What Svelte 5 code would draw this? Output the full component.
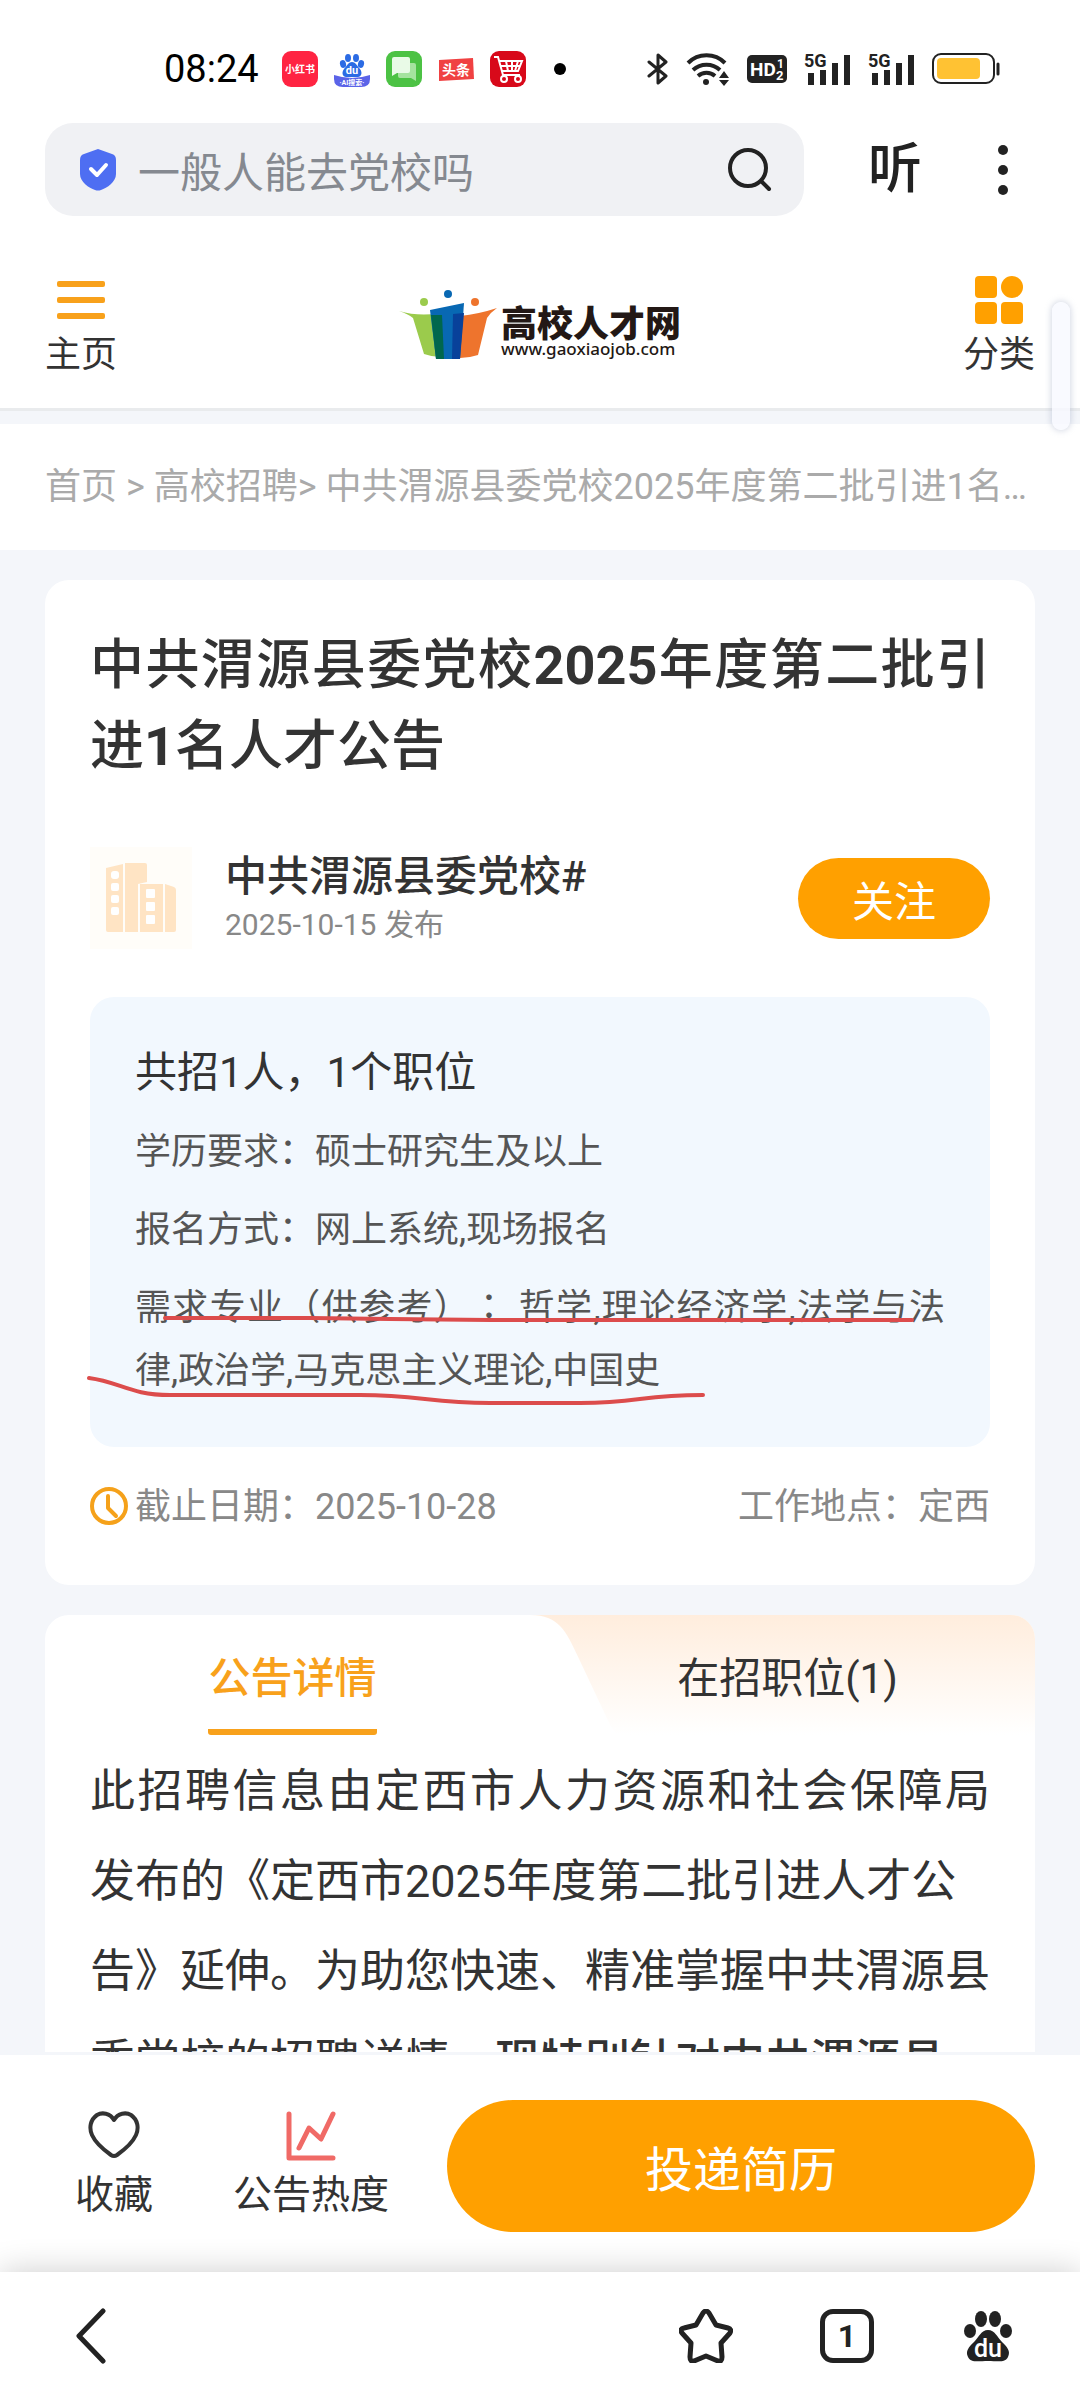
<script>
  const facts = [
    { label: "学历要求：", value: "硕士研究生及以上" },
    { label: "报名方式：", value: "网上系统,现场报名" }
  ];

  let query = "一般人能去党校吗";
  let activeTab = "detail";
</script>

<div class="screen">
  <div class="status">
    <span class="time">08:24</span>
    <div class="apps">
      <svg width="36" height="36" viewBox="0 0 36 36" aria-hidden="true">
        <rect width="36" height="36" rx="9" fill="#ff2442" />
        <text x="18" y="22" text-anchor="middle" font-size="10" font-weight="700" fill="#fff">小红书</text>
      </svg>
      <svg width="36" height="36" viewBox="0 0 36 36" aria-hidden="true">
        <g fill="#2b6be4">
          <ellipse cx="14" cy="7" rx="3" ry="4" />
          <ellipse cx="22" cy="7" rx="3" ry="4" />
          <ellipse cx="9" cy="13" rx="3" ry="4" transform="rotate(-15 9 13)" />
          <ellipse cx="27" cy="13" rx="3" ry="4" transform="rotate(15 27 13)" />
          <path d="M18 11c4 0 5 4 8 7 3 4 1 8-2 8H12c-3 0-5-4-2-8 3-3 4-7 8-7z" />
        </g>
        <text x="18" y="23" text-anchor="middle" font-size="11" font-weight="700" fill="#fff">du</text>
        <path d="M0 24q18 6 36 0v4q0 8-9 8H9q-9 0-9-8z" fill="#5b63e8" />
        <text x="18" y="34" text-anchor="middle" font-size="7" font-weight="700" fill="#fff">·AI搜索·</text>
      </svg>
      <svg width="36" height="36" viewBox="0 0 36 36" aria-hidden="true">
        <rect width="36" height="36" rx="9" fill="#4cc244" />
        <path d="M14 12h14q2 0 2 2v16l-5-3H14q-2 0-2-2V14q0-2 2-2z" fill="#a5e39f" />
        <path d="M8 6h14q2 0 2 2v12q0 2-2 2H11l-5 3V8q0-2 2-2z" fill="#e9fae7" />
      </svg>
      <svg width="36" height="36" viewBox="0 0 36 36" aria-hidden="true">
        <path d="M1 9l34-2 1 21-35 2z" fill="#f04142" />
        <text x="18" y="24" text-anchor="middle" font-size="14" font-weight="700" fill="#fff">头条</text>
      </svg>
      <svg width="36" height="36" viewBox="0 0 36 36" aria-hidden="true">
        <rect width="36" height="36" rx="9" fill="#d8091a" />
        <path d="M4 6h4l5 18h17M9 10h23l-4 10H12M10 15h20M16 10l2 10M22 10v10M28 10l-3 10" fill="none" stroke="#fff" stroke-width="2" />
        <circle cx="14" cy="28" r="3" fill="none" stroke="#fff" stroke-width="2" />
        <circle cx="28" cy="28" r="3" fill="none" stroke="#fff" stroke-width="2" />
      </svg>
    </div>
    <i class="more-dot"></i>
    <div class="signals">
      <svg width="22" height="34" viewBox="0 0 22 34" aria-hidden="true">
        <path d="M2 10l17 14-8 7V3l8 7L2 24" fill="none" stroke="#222" stroke-width="3" stroke-linejoin="round" stroke-linecap="round" />
      </svg>
      <svg width="44" height="34" viewBox="0 0 44 34" aria-hidden="true">
        <g fill="none" stroke="#222" stroke-width="4">
          <path d="M2 11a26 26 0 0 1 37 0" />
          <path d="M7 18a20 20 0 0 1 27 0" />
          <path d="M12 24a13 13 0 0 1 17 0" />
        </g>
        <circle cx="20" cy="30" r="3" fill="#222" />
        <path d="M38 19l5 7H33zM38 34l5-6H33z" fill="#222" />
      </svg>
      <svg width="40" height="28" viewBox="0 0 40 28" aria-hidden="true">
        <rect width="40" height="28" rx="5" fill="#222" />
        <text x="3" y="21" font-size="19" font-weight="700" fill="#fff">HD</text>
        <text x="30" y="13" font-size="12" font-weight="700" fill="#fff">1</text>
        <text x="29" y="25" font-size="13" font-weight="700" fill="#fff">2</text>
      </svg>
      {#each [1, 2] as sim (sim)}
        <svg width="47" height="34" viewBox="0 0 47 34" aria-hidden="true">
          <text x="0" y="15" font-size="18" font-weight="700" fill="#222">5G</text>
          <path d="M4 21h6v12H4zM16 18h6v15h-6zM28 11h6v22h-6zM40 3h6v30h-6z" fill="#222" />
        </svg>
      {/each}
      <svg width="68" height="32" viewBox="0 0 68 32" aria-hidden="true">
        <rect x="1" y="1" width="61" height="29" rx="8" fill="none" stroke="#222" stroke-width="2" />
        <rect x="5" y="5" width="43" height="21" rx="4" fill="#ffc233" />
        <path d="M66 11v10" stroke="#222" stroke-width="3" stroke-linecap="round" />
      </svg>
    </div>
  </div>

  <form class="browser" on:submit|preventDefault>
    <div class="search">
      <svg width="36" height="42" viewBox="0 0 36 42" aria-hidden="true">
        <path d="M18 0l14 5q4 1 4 6v14c0 8-9 14-15 16q-3 1-6 0C9 39 0 33 0 25V11q0-5 4-6z" fill="#4e6ef2" />
        <path d="M11 20l6 6 9-10" fill="none" stroke="#fff" stroke-width="4" stroke-linecap="round" stroke-linejoin="round" />
      </svg>
      <input type="text" aria-label="搜索" bind:value={query} />
      <button class="plain" type="submit" aria-label="搜索">
        <svg width="44" height="44" viewBox="0 0 44 44">
          <circle cx="20" cy="20" r="18" fill="none" stroke="#222" stroke-width="4" />
          <path d="M34 34l7 7" stroke="#222" stroke-width="4" stroke-linecap="round" />
        </svg>
      </button>
    </div>
    <button class="plain listen" type="button">听</button>
    <button class="plain" type="button" aria-label="更多">
      <svg width="10" height="50" viewBox="0 0 10 50" fill="#222">
        <circle cx="5" cy="5" r="5" />
        <circle cx="5" cy="25" r="5" />
        <circle cx="5" cy="45" r="5" />
      </svg>
    </button>
  </form>

  <header>
    <a class="nav-link" href="#home">
      <svg width="48" height="48" viewBox="0 0 48 48" fill="#f8a11b" aria-hidden="true">
        <rect y="5" width="48" height="6" rx="2" />
        <rect y="21" width="48" height="6" rx="2" />
        <rect y="37" width="48" height="6" rx="2" />
      </svg>
      主页
    </a>
    <a class="logo" href="#gaoxiaojob">
      <svg width="98" height="70" viewBox="0 0 98 70" aria-hidden="true">
        <path d="M0 21q20 6 42 2v44q-9 0-17-3L14 28q-5-4-14-7z" fill="#9bcb4c" />
        <path d="M98 18q-18 6-37 8v42q9 0 18-3l9-37q4-6 10-10z" fill="#ee742d" />
        <path d="M31 20l34-7-4 56H37z" fill="#0868b3" />
        <path d="M32 25h11l2 44h-8z" fill="#00674d" />
        <path d="M54 24l11-1-4 46h-8z" fill="#08419a" />
        <circle cx="25" cy="12" r="4" fill="#9bcb4c" />
        <circle cx="49" cy="4" r="4" fill="#0868b3" />
        <circle cx="76" cy="12" r="4" fill="#ee742d" />
      </svg>
      <span class="logo-text">
        <b>高校人才网</b>
        <small>www.gaoxiaojob.com</small>
      </span>
    </a>
    <a class="nav-link" href="#category">
      <svg width="48" height="48" viewBox="0 0 48 48" fill="#ffa000" aria-hidden="true">
        <rect width="22" height="22" rx="4" />
        <circle cx="37" cy="11" r="11" />
        <rect y="26" width="22" height="22" rx="4" />
        <rect x="26" y="26" width="22" height="22" rx="4" />
      </svg>
      分类
    </a>
  </header>
  <div class="scroll-handle"></div>

  <main>
    <nav class="crumbs">
      <a href="#home">首页</a> &gt; <a href="#jobs">高校招聘</a>&gt; 中共渭源县委党校2025年度第二批引进1名人才公告
    </nav>

    <article class="card summary">
      <h1>中共渭源县委党校<b>2025</b>年度第二批引进<b>1</b>名人才公告</h1>

      <div class="org">
        <div class="org-logo">
          <svg width="70" height="70" viewBox="0 0 70 70" aria-hidden="true">
            <path d="M0 5l17-4v68H2q-2 0-2-2zM19 0h20q2 0 2 2v17l-9 2v48H19zM34 21h23v48H34zM59 21l9 3q2 1 2 3v40q0 2-2 2h-9z" fill="#ffe4c4" />
            <g fill="#fff">
              <rect x="5" y="8" width="8" height="8" rx="3" />
              <rect x="5" y="20" width="8" height="8" rx="2" />
              <rect x="5" y="32" width="8" height="8" rx="2" />
              <rect x="5" y="44" width="8" height="8" rx="2" />
              <rect x="40" y="26" width="9" height="9" rx="1" />
              <rect x="40" y="39" width="9" height="9" rx="1" />
              <rect x="40" y="52" width="9" height="9" rx="1" />
            </g>
          </svg>
        </div>
        <div class="org-info">
          <h2>中共渭源县委党校#</h2>
          <time datetime="2025-10-15">2025-10-15 发布</time>
        </div>
        <button class="follow" type="button">关注</button>
      </div>

      <section class="facts">
        <h3>共招1人，1个职位</h3>
        {#each facts as fact}
          <p>{fact.label}{fact.value}</p>
        {/each}
        <p>
          需求专业（供参考）<span class="colon">：</span> 哲学,理论经济学,法学与法律,政治学,马克思主义理论,中国史
        </p>
        <!-- hand-drawn underlines over the majors -->
        <svg class="marks" viewBox="0 0 900 450" aria-hidden="true">
          <path d="M75 321H220L300 322 400 323H822" />
          <path d="M-1 381C30 385 40 398 80 398H270C330 398 340 406 400 406H490C550 406 550 398 613 398" />
        </svg>
      </section>

      <div class="meta">
        <svg width="40" height="40" viewBox="0 0 40 40" fill="none" stroke="#f5a11a" stroke-width="4" aria-hidden="true">
          <circle cx="19" cy="19" r="17" />
          <path d="M18 9v12l8 8" stroke-linecap="round" stroke-linejoin="round" />
        </svg>
        <span>截止日期：2025-10-28</span>
        <span class="place">工作地点：定西</span>
      </div>
    </article>

    <article class="card detail">
      <div class="tabs" role="tablist">
        <svg class="tab-shape" viewBox="0 0 550 120" preserveAspectRatio="none" aria-hidden="true">
          <defs>
            <linearGradient id="tabFill" x1="0" y1="0" x2="0" y2="1">
              <stop offset="0" stop-color="#ffeddd" />
              <stop offset="1" stop-color="#fff" />
            </linearGradient>
          </defs>
          <path d="M40 0C68 0 76 16 88 42L118 105Q124 120 134 120H550V0z" fill="url(#tabFill)" />
        </svg>
        <button class="tab" role="tab" type="button" class:active={activeTab === "detail"} aria-selected={activeTab === "detail"} on:click={() => (activeTab = "detail")}>
          <span>公告详情</span>
        </button>
        <button class="tab" role="tab" type="button" class:active={activeTab === "jobs"} aria-selected={activeTab === "jobs"} on:click={() => (activeTab = "jobs")}>
          <span>在招职位(1)</span>
        </button>
      </div>
      <p class="body">
        <span class="spread">此招聘信息由定西市人力资源和社会保障局</span>发布的《定西市2025年度第二批引进人才公告》延伸。为助您快速、精准掌握中共渭源县委党校的招聘详情，<b>现特别针对中共渭源县</b>
      </p>
    </article>
  </main>

  <div class="actions">
    <button class="plain action" type="button">
      <svg width="52" height="52" viewBox="0 0 52 52" aria-hidden="true">
        <path d="M26 10C22 3 14 2 9 5 2 10 1 18 4 25c4 9 12 15 19 20q3 2 6 0c7-5 15-11 19-20 3-7 2-15-5-20C38 2 30 3 26 10z" fill="none" stroke="#333" stroke-width="4" stroke-linejoin="round" />
      </svg>
      收藏
    </button>
    <button class="plain action" type="button">
      <svg width="52" height="52" viewBox="0 0 52 52" fill="none" stroke="#f06a66" stroke-width="5" stroke-linecap="round" stroke-linejoin="round" aria-hidden="true">
        <path d="M4 4v44h44" />
        <path d="M14 38l10-20 12 11L48 4" />
      </svg>
      公告热度
    </button>
    <button class="apply" type="button">投递简历</button>
  </div>

  <nav class="toolbar">
    <button class="plain back" type="button" aria-label="返回">
      <svg width="32" height="56" viewBox="0 0 32 56">
        <path d="M28 3L4 28l24 25" fill="none" stroke="#222" stroke-width="5" stroke-linecap="round" stroke-linejoin="round" />
      </svg>
    </button>
    <button class="plain" type="button" aria-label="收藏">
      <svg width="54" height="54" viewBox="0 0 54 54">
        <path d="M24 4q3-4 6 0l7 12 12 3q4 1 2 5l-9 10 1 14q0 5-4 4l-12-5-12 5q-4 1-4-4l1-14-9-10q-3-4 2-5l12-3z" fill="none" stroke="#222" stroke-width="5" stroke-linejoin="round" />
      </svg>
    </button>
    <button class="plain windows" type="button">1</button>
    <button class="plain" type="button" aria-label="百度首页">
      <svg width="54" height="54" viewBox="0 0 54 54">
        <g fill="#222">
          <ellipse cx="20" cy="10" rx="6" ry="8" />
          <ellipse cx="34" cy="10" rx="6" ry="8" />
          <ellipse cx="9" cy="22" rx="6" ry="7" />
          <ellipse cx="45" cy="22" rx="6" ry="7" />
          <path d="M27 21c7 0 9 7 14 12s9 9 6 15-10 4-20 4-17 2-20-4 1-10 6-15 7-12 14-12z" />
        </g>
        <text x="27" y="48" text-anchor="middle" font-size="25" font-weight="500" fill="#fff">du</text>
      </svg>
    </button>
  </nav>
</div>

<style>
  :global(body) {
    margin: 0;
  }

  .screen {
    position: relative;
    display: flex;
    flex-direction: column;
    height: 100vh;
    overflow: hidden;
    background: #fff;
    color: #333;
    font-family: Roboto, "Noto Sans CJK SC", sans-serif;
    font-size: 36px;
  }

  svg {
    display: block;
    flex: none;
  }

  a {
    color: inherit;
    text-decoration: none;
  }

  h1,
  h2,
  h3,
  p {
    margin: 0;
    font-weight: 400;
  }

  button {
    padding: 0;
    border: none;
    font-family: inherit;
    cursor: pointer;
  }

  .plain {
    background: none;
    color: #333;
  }

  /* system bar */
  .status {
    display: flex;
    align-items: center;
    height: 36px;
    padding: 51px 80px 36px 164px;
  }

  .time {
    font-size: 38px;
    color: #000;
  }

  .apps {
    display: flex;
    gap: 16px;
    margin-left: 23px;
  }

  .more-dot {
    width: 12px;
    height: 12px;
    margin-left: 28px;
    border-radius: 50%;
    background: #000;
  }

  .signals {
    display: flex;
    align-items: center;
    gap: 17px;
    margin-left: auto;
  }

  /* browser address row */
  .browser {
    display: flex;
    align-items: center;
    padding: 0 72px 0 45px;
  }

  .search {
    display: flex;
    flex: 1;
    align-items: center;
    height: 93px;
    padding: 0 32px 0 35px;
    border-radius: 28px;
    background: #f0f1f4;
  }

  .search input {
    flex: 1;
    min-width: 0;
    padding: 0 0 0 22px;
    border: none;
    outline: none;
    background: none;
    color: #858990;
    font-family: inherit;
    font-size: 42px;
  }

  .listen {
    margin: 0 76px 0 64px;
    font-size: 54px;
    font-weight: 500;
    line-height: 60px;
    color: #222;
  }

  header {
    display: flex;
    align-items: center;
    justify-content: space-between;
    padding: 60px 45px 26px;
    border-bottom: 3px solid #e9ebed;
  }

  .nav-link {
    display: flex;
    flex-direction: column;
    align-items: center;
    gap: 4px;
    line-height: 54px;
  }

  .logo {
    display: flex;
    align-items: center;
    gap: 4px;
    color: #231815;
  }

  .logo svg {
    margin-bottom: 8px;
  }

  .logo-text {
    display: flex;
    flex-direction: column;
    padding-top: 8px;
  }

  .logo-text b {
    font-size: 36px;
    font-weight: 900;
    line-height: 32px;
  }

  .logo-text small {
    font-family: "Noto Sans", sans-serif;
    font-size: 17px;
    font-weight: 500;
    line-height: 16px;
  }

  .scroll-handle {
    position: absolute;
    top: 302px;
    right: 10px;
    z-index: 2;
    width: 18px;
    height: 128px;
    border-radius: 9px;
    background: rgba(248, 249, 255, 0.8);
    box-shadow: 0 0 6px 1px rgba(150, 160, 190, 0.4);
  }

  main {
    flex: 1;
    min-height: 0;
    overflow: hidden;
    padding-top: 13px;
    background: #f4f6fa;
  }

  .crumbs {
    margin-bottom: 30px;
    padding: 0 45px;
    overflow: hidden;
    background: #fff;
    color: #aaa;
    line-height: 126px;
    text-overflow: ellipsis;
    white-space: nowrap;
  }

  .card {
    margin: 0 45px 30px;
    border-radius: 24px;
    background: #fff;
  }

  .summary {
    padding: 45px 45px 54px;
  }

  h1 {
    font-size: 54px;
    font-weight: 500;
    line-height: 81px;
    text-align: justify;
  }

  .org {
    display: flex;
    align-items: center;
    margin: 60px 0 48px;
  }

  .org-logo {
    display: flex;
    align-items: center;
    justify-content: center;
    width: 102px;
    height: 102px;
    margin-right: 33px;
    background: #fffdf9;
  }

  .org-info {
    flex: 1;
  }

  h2 {
    font-size: 42px;
    font-weight: 500;
    line-height: 54px;
  }

  time {
    display: block;
    color: #888;
    font-size: 30px;
    line-height: 42px;
  }

  .follow {
    width: 192px;
    height: 81px;
    border-radius: 41px;
    background: #ffa000;
    color: #fff;
    font-size: 42px;
  }

  .facts {
    position: relative;
    padding: 46px 45px 44px;
    border-radius: 24px;
    background: #f2f8fe;
    color: #555;
    line-height: 63px;
    text-align: justify;
    text-spacing-trim: space-all;
  }

  .facts h3 {
    margin-bottom: 18px;
    color: #333;
    font-size: 42px;
    line-height: 60px;
  }

  .facts p + p {
    margin-top: 15px;
  }

  .colon {
    font-family: "Noto Sans CJK TC", sans-serif;
    line-height: 36px;
  }

  .marks {
    position: absolute;
    top: 0;
    left: 0;
    width: 100%;
    overflow: visible;
    fill: none;
    stroke: #dc4c4c;
    stroke-width: 4px;
    stroke-linecap: round;
    pointer-events: none;
  }

  .meta {
    display: flex;
    align-items: center;
    margin-top: 36px;
    color: #888;
    line-height: 48px;
  }

  .meta span {
    padding-left: 5px;
  }

  .meta .place {
    margin-left: auto;
  }

  .tabs {
    position: relative;
    display: flex;
    overflow: hidden;
    border-radius: 24px 24px 0 0;
  }

  .tab-shape {
    position: absolute;
    top: 0;
    right: 0;
    width: 55%;
    height: 100%;
  }

  .tab {
    position: relative;
    flex: 1;
    padding: 37px 0 0;
    background: none;
    color: #333;
    font-size: 42px;
    line-height: 54px;
  }

  .tab span {
    display: inline-block;
    padding-bottom: 23px;
    border-bottom: 6px solid transparent;
    border-radius: 3px;
  }

  .tab.active {
    color: #f8a11b;
    font-weight: 500;
  }

  .tab.active span {
    border-color: #f8a11b;
  }

  .body {
    padding: 12px 45px 45px;
    font-size: 45px;
    line-height: 90px;
  }

  .body b {
    font-weight: 500;
  }

  .spread {
    display: block;
    text-align-last: justify;
  }

  .actions {
    display: flex;
    align-items: center;
    padding: 45px 45px 40px 75px;
    border-top: 3px solid #f4f6fa;
  }

  .action {
    display: flex;
    flex-direction: column;
    align-items: center;
    gap: 6px;
    margin-right: 80px;
    font-size: 39px;
    line-height: 54px;
  }

  .action + .action {
    margin-right: 58px;
  }

  .apply {
    flex: 1;
    height: 132px;
    border-radius: 66px;
    background: #ffa000;
    color: #fff;
    font-size: 48px;
  }

  .toolbar {
    position: relative;
    display: flex;
    align-items: center;
    gap: 87px;
    height: 128px;
    padding: 0 65px 0 75px;
    background: #fff;
    box-shadow: 0 0 32px rgba(0, 0, 0, 0.2);
  }

  .back {
    margin-right: auto;
  }

  .windows {
    box-sizing: border-box;
    width: 54px;
    height: 54px;
    border: 5px solid #222;
    border-radius: 13px;
    color: #222;
    font-size: 32px;
    font-weight: 700;
    line-height: 44px;
  }
</style>
